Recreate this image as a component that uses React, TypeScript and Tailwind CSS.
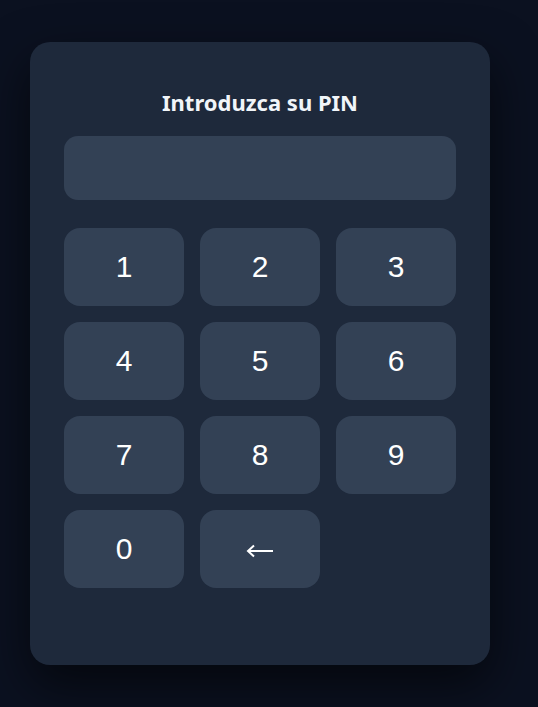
const keys = ["1", "2", "3", "4", "5", "6", "7", "8", "9", "0", "←"];

function BackArrow() {
  return (
    <svg width="28" height="14" viewBox="0 0 28 14" fill="none" aria-label="←" className="mt-[4px]">
      <path d="M2.5 7H27" stroke="white" strokeWidth="2" />
      <path d="M8 1.5L2 7L8 12.5" stroke="white" strokeWidth="2" strokeLinejoin="miter" />
    </svg>
  );
}

export default function App() {
  return (
    <div className="min-h-[707px] w-full bg-[#0b1120] pt-[42px] pl-[30px]">
      <div className="w-[460px] rounded-[20px] bg-[#1e293b] px-[34px] pt-[46px] pb-[77px] shadow-[0_20px_50px_rgba(0,0,0,0.6)]">
        <h1
          className="h-[28px] text-center text-[22px] font-bold leading-[28px] text-[#f1f5f9]"
          style={{ fontFamily: '"Noto Sans", "Open Sans", sans-serif' }}
        >
          Introduzca su PIN
        </h1>
        <div className="mt-[20px] h-[64px] w-full rounded-[14px] bg-[#334155]" />
        <div className="mt-[28px] grid grid-cols-3 gap-4">
          {keys.map((k) => (
            <button
              key={k}
              className="flex h-[78px] items-center justify-center rounded-2xl bg-[#334155] text-white"
            >
              {k === "←" ? (
                <BackArrow />
              ) : (
                <span
                  className="-mt-[2px] text-[30px]"
                  style={{ fontFamily: '"Liberation Sans", Arial, sans-serif' }}
                >
                  {k}
                </span>
              )}
            </button>
          ))}
        </div>
      </div>
    </div>
  );
}
